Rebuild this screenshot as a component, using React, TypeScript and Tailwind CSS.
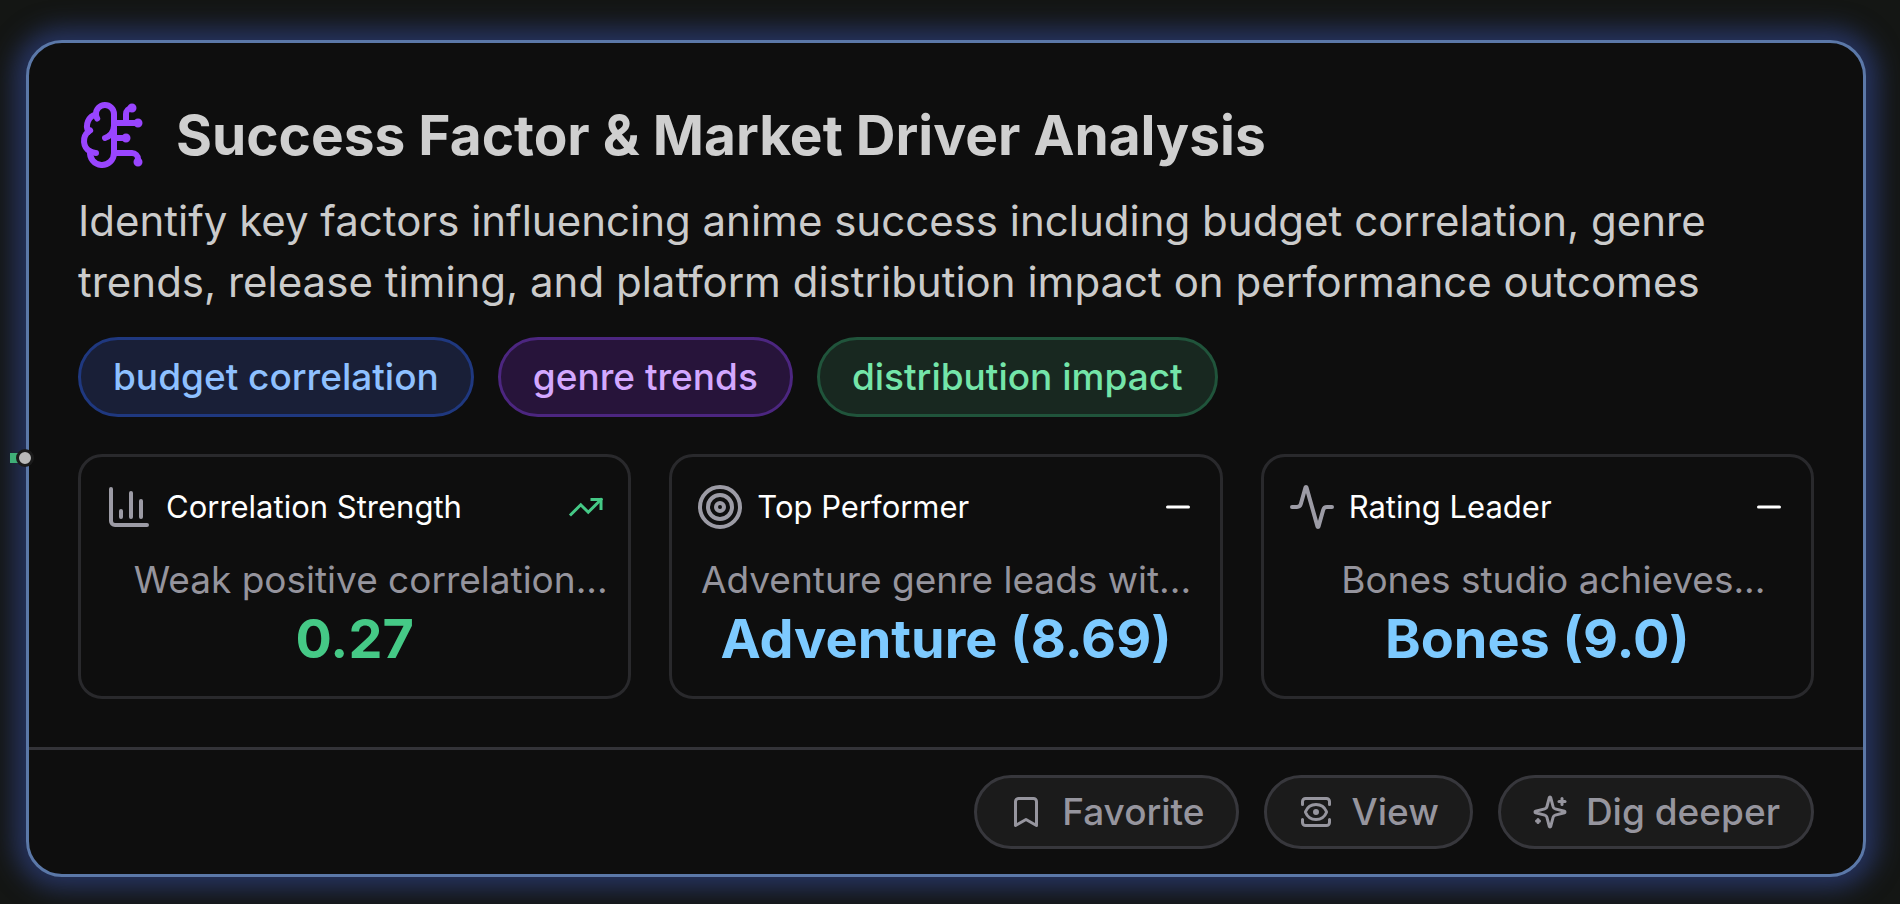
import { Activity, Bookmark, BrainCircuit, ChartColumn, Minus, Target, View } from "lucide-react";
import type { ComponentType } from "react";

type IconType = ComponentType<{ size?: number; className?: string }>;

function TrendUp({ size = 24, className }: { size?: number; className?: string }) {
  return (
    <svg
      width={size}
      height={size}
      viewBox="0 0 24 24"
      fill="none"
      stroke="currentColor"
      strokeWidth={2}
      strokeLinecap="square"
      strokeLinejoin="miter"
      className={className}
      aria-hidden="true"
    >
      <path d="M16 7h6v6" />
      <path d="m22 7-8.5 8.5-5-5L2 17" />
    </svg>
  );
}

function Sparkles({ size = 24, className }: { size?: number; className?: string }) {
  return (
    <svg
      width={size}
      height={size}
      viewBox="0 0 24 24"
      fill="none"
      stroke="currentColor"
      strokeWidth={2}
      strokeLinecap="round"
      strokeLinejoin="round"
      className={className}
      aria-hidden="true"
    >
      <path d="M9.937 15.5A2 2 0 0 0 8.5 14.063l-6.135-1.582a.5.5 0 0 1 0-.962L8.5 9.936A2 2 0 0 0 9.937 8.5l1.582-6.135a.5.5 0 0 1 .963 0L14.063 8.5A2 2 0 0 0 15.5 9.937l6.135 1.581a.5.5 0 0 1 0 .964L15.5 14.063a2 2 0 0 0-1.437 1.437l-1.582 6.135a.5.5 0 0 1-.963 0z" />
      <path d="M20 3v4" />
      <path d="M22 5h-4" />
      <path d="M4 17v2" />
      <path d="M5 18H3" />
    </svg>
  );
}

const tags = [
  { label: "budget correlation", style: "border-[#1f387f] bg-[#191f37] text-[#8ec0ff]" },
  { label: "genre trends", style: "border-[#4c2680] bg-[#27143a] text-[#d3a8ff]" },
  { label: "distribution impact", style: "border-[#20543b] bg-[#182820] text-[#74e5a9]" },
];

type Metric = {
  name: string;
  icon: IconType;
  trend: IconType;
  trendStyle: string;
  summary: string;
  hanging: boolean;
  value: string;
  valueStyle: string;
};

const metrics: Metric[] = [
  {
    name: "Correlation Strength",
    icon: ChartColumn,
    trend: TrendUp,
    trendStyle: "text-[#45c986]",
    summary: "Weak positive correlation",
    hanging: true,
    value: "0.27",
    valueStyle: "text-[#45c986]",
  },
  {
    name: "Top Performer",
    icon: Target,
    trend: Minus,
    trendStyle: "text-white",
    summary: "Adventure genre leads wit",
    hanging: false,
    value: "Adventure (8.69)",
    valueStyle: "text-[#7dcaff]",
  },
  {
    name: "Rating Leader",
    icon: Activity,
    trend: Minus,
    trendStyle: "text-white",
    summary: "Bones studio achieves",
    hanging: true,
    value: "Bones (9.0)",
    valueStyle: "text-[#7dcaff]",
  },
];

const actions: { label: string; icon: IconType }[] = [
  { label: "Favorite", icon: Bookmark },
  { label: "View", icon: View },
  { label: "Dig deeper", icon: Sparkles },
];

function MetricCard({ metric }: { metric: Metric }) {
  const Icon = metric.icon;
  const Trend = metric.trend;
  return (
    <section className="min-w-0 rounded-3xl border-3 border-[#29292c] px-6 pt-[26px] pb-[25px]">
      <div className="flex items-center gap-[13px]">
        <Icon size={48} className="shrink-0 text-[#9c9ba5]" />
        <h2 className="flex-1 text-[31px] leading-9 whitespace-nowrap text-white">{metric.name}</h2>
        <Trend size={36} className={metric.trendStyle} />
      </div>
      <p className="mt-[25px] text-center text-[37px] leading-12 whitespace-nowrap text-[#95949d]">
        {metric.summary}
        <span className={metric.hanging ? "inline-block w-0" : ""}>...</span>
      </p>
      <p className={`mt-[3px] text-center text-[54px] leading-16 font-bold whitespace-nowrap ${metric.valueStyle}`}>
        {metric.value}
      </p>
    </section>
  );
}

export default function App() {
  return (
    <main className="min-h-screen bg-[#141614] pt-10 pr-[34px] pb-6 pl-[26px] font-['Inter','Liberation_Sans',sans-serif]">
      <article className="relative rounded-[36px] border-3 border-[#5b78a8] bg-[#0e0e0e] shadow-[0_0_24px_12px_#26335f]">
        <span className="absolute top-[410px] -left-[19px] h-2.5 w-2 bg-[#3fae77]" />
        <span className="absolute top-[406px] -left-[13px] size-[18px] rounded-full border-3 border-[#1b1b1b] bg-[#b9b9b9]" />
        <div className="px-[49px] pt-14 pb-12">
          <header className="flex items-center gap-[26px]">
            <BrainCircuit size={72} className="shrink-0 text-[#9945ff]" />
            <h1 className="text-[55px] leading-[72px] font-bold text-[#cfcfcf]">
              Success Factor &amp; Market Driver Analysis
            </h1>
          </header>
          <p className="mt-[19px] text-[42px] leading-[61px] text-[#cbcbcb]">
            Identify key factors influencing anime success including budget correlation, genre trends, release timing,
            and platform distribution impact on performance outcomes
          </p>
          <ul className="mt-[25px] flex gap-6">
            {tags.map((tag) => (
              <li
                key={tag.label}
                className={`rounded-full border-3 px-8 py-3 text-[37px] leading-[50px] font-medium ${tag.style}`}
              >
                {tag.label}
              </li>
            ))}
          </ul>
          <div className="mt-[37px] grid grid-cols-3 gap-[38px]">
            {metrics.map((metric) => (
              <MetricCard key={metric.name} metric={metric} />
            ))}
          </div>
        </div>
        <footer className="flex justify-end gap-[25px] border-t-3 border-[#333338] px-[49px] py-[25px]">
          {actions.map(({ label, icon: Icon }) => (
            <button
              key={label}
              type="button"
              className="flex items-center gap-[18px] rounded-full border-3 border-[#37373c] bg-[#1b1b1b] px-[31px] py-2.5 text-[37px] leading-12 font-medium text-[#96959e]"
            >
              <Icon size={36} />
              {label}
            </button>
          ))}
        </footer>
      </article>
    </main>
  );
}
